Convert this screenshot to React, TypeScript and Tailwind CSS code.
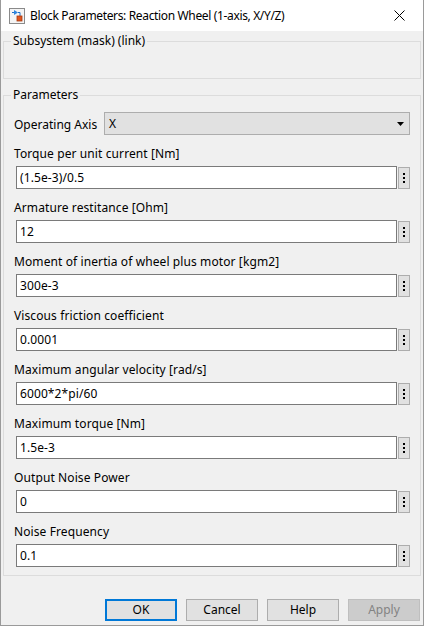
const fields = [
  { label: "Torque per unit current [Nm]", value: "(1.5e-3)/0.5" },
  { label: "Armature restitance [Ohm]", value: "12" },
  { label: "Moment of inertia of wheel plus motor [kgm2]", value: "300e-3" },
  { label: "Viscous friction coefficient", value: "0.0001" },
  { label: "Maximum angular velocity [rad/s]", value: "6000*2*pi/60" },
  { label: "Maximum torque [Nm]", value: "1.5e-3" },
  { label: "Output Noise Power", value: "0" },
  { label: "Noise Frequency", value: "0.1" },
];

const BlockIcon = () => (
  <svg width="16" height="16" viewBox="0 0 16 16">
    <rect x="0.5" y="0.5" width="15" height="15" fill="#f4f4f4" stroke="#8a8a8a" />
    <path d="M3 4.5h2" stroke="#1f6fc4" strokeWidth="1" />
    <path d="M5 2v5l4-2.5z" fill="#2f86de" />
    <path d="M9 4.5h2v4" stroke="#1f6fc4" strokeWidth="1" fill="none" />
    <rect x="8" y="8" width="5" height="5" fill="#e0561e" stroke="#a8380e" strokeWidth="0.8" />
  </svg>
);

const EllipsisButton = () => (
  <button className="flex h-[22px] w-[12px] flex-col items-center justify-center gap-[2px] border border-[#adadad] bg-[#e1e1e1]">
    <span className="h-[2px] w-[2px] bg-black" />
    <span className="h-[2px] w-[2px] bg-black" />
    <span className="h-[2px] w-[2px] bg-black" />
  </button>
);

const ParamField = ({ label, value }: { label: string; value: string }) => (
  <div className="mt-[10px] flex flex-col">
    <div className="pt-[1px] leading-[16px] tracking-[0.1px]">{label}</div>
    <div className="mt-[4px] flex items-end gap-[1px] pl-[2px]">
      <div className="flex h-[23px] flex-1 items-center border border-[#7a7a7a] bg-white px-[3px] tracking-[0.1px]">
        {value}
      </div>
      <EllipsisButton />
    </div>
  </div>
);

const DialogButton = ({
  children,
  variant = "normal",
}: {
  children: string;
  variant?: "normal" | "default" | "disabled";
}) => {
  const styles = {
    normal: "border border-[#adadad] bg-[#e1e1e1] text-black",
    default: "border-2 border-[#0078d7] bg-[#e1e1e1] text-black",
    disabled: "border border-[#bfbfbf] bg-[#cccccc] text-[#838383]",
  };
  return (
    <button className={`flex h-[22px] w-[72px] items-center justify-center ${styles[variant]}`}>
      {children}
    </button>
  );
};

export default function App() {
  return (
    <div
      className="flex h-[626px] w-[424px] flex-col border-x border-b border-[#9a9a9a] bg-[#f0f0f0] text-[12px] text-black"
      style={{ fontFamily: '"Noto Sans", "Open Sans", sans-serif' }}
    >
      {/* title bar */}
      <div className="flex h-[31px] items-center bg-white pl-[8px]">
        <BlockIcon />
        <span className="ml-[5px] flex-1 tracking-[-0.35px]">
          Block Parameters: Reaction Wheel (1-axis, X/Y/Z)
        </span>
        <svg width="46" height="30" viewBox="0 0 46 30">
          <path d="M17.5 9.5l10 10M27.5 9.5l-10 10" stroke="#000" strokeWidth="1" />
        </svg>
      </div>

      <div className="flex flex-1 flex-col px-[2px] pt-[2px]">
        <fieldset className="border border-[#dcdcdc]">
          <legend className="ml-[7px] px-[2px] leading-[16px]">Subsystem (mask) (link)</legend>
          <div className="h-[29px]" />
        </fieldset>

        <fieldset className="mt-[8px] border border-[#dcdcdc] pb-[8px] pl-[10px] pr-[10px]">
          <legend className="-ml-[3px] px-[2px] leading-[16px]">Parameters</legend>
          <div className="mt-[9px] flex items-center">
            <span className="w-[90px] pt-[2px] leading-[16px]">Operating Axis</span>
            <div className="flex h-[23px] flex-1 items-center justify-between border border-[#adadad] bg-[#e1e1e1] pl-[4px] pr-[5px]">
              <span>X</span>
              <svg width="7" height="4" viewBox="0 0 7 4">
                <path d="M0 0h7l-3.5 4z" fill="#000" />
              </svg>
            </div>
          </div>
          {fields.map((f) => (
            <ParamField key={f.label} label={f.label} value={f.value} />
          ))}
        </fieldset>

        <div className="mt-[23px] flex justify-end gap-[9px] pr-[1px]">
          <DialogButton variant="default">OK</DialogButton>
          <DialogButton>Cancel</DialogButton>
          <DialogButton>Help</DialogButton>
          <DialogButton variant="disabled">Apply</DialogButton>
        </div>
      </div>
    </div>
  );
}
